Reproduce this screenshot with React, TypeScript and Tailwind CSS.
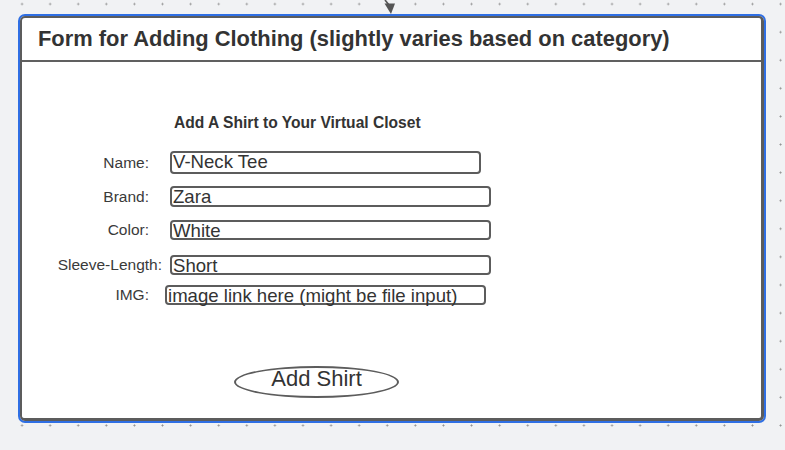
const FIELDS = [
  { label: "Name:", value: "V-Neck Tee", row: "mt-[20px] h-[23px]", pad: "pr-[13px]", input: "ml-[8px] w-[311px]" },
  { label: "Brand:", value: "Zara", row: "mt-[12px] h-[21px]", pad: "pr-[13px]", input: "ml-[8px] w-[321px]" },
  { label: "Color:", value: "White", row: "mt-[13px] h-[20px]", pad: "pr-[13px]", input: "ml-[8px] w-[321px]" },
  { label: "Sleeve-Length:", value: "Short", row: "mt-[15px] h-[20px]", pad: "pr-0", input: "ml-[8px] w-[321px]" },
  { label: "IMG:", value: "image link here (might be file input)", row: "mt-[10px] h-[20px]", pad: "pr-[13px]", input: "ml-[3px] w-[321px]" },
];

function Connector() {
  return (
    <svg className="absolute left-[380px] top-0" width="20" height="16" viewBox="380 0 20 16">
      <path d="M385 0 L389 5" stroke="#555" strokeWidth="1.6" fill="none" />
      <polygon points="384.5,3.5 395,3.5 391,14" fill="#555" />
    </svg>
  );
}

export default function App() {
  return (
    <div className="relative h-[450px] w-full overflow-hidden bg-[#f1f2f4] bg-[radial-gradient(circle,#8f8f8f_0.8px,transparent_1.2px)] bg-[size:28.1px_28.1px] bg-[position:8px_-10px] pt-[14px] font-['Liberation_Sans',Arial,sans-serif] text-[#333]">
      <Connector />
      <div className="ml-[18px] h-[409px] w-[748px] rounded-[7px] border-2 border-[#2f6fe4]">
        <div className="flex h-full flex-col rounded-[5px] border-l-2 border-t-2 border-r-[3px] border-b-[3px] border-[#5c5c5c] bg-white">
          <div className="h-[44px] border-b-2 border-[#606060] pl-[16px] pt-[8px]">
            <h1 className="text-[21.9px] font-bold leading-[26px]">
              Form for Adding Clothing (slightly varies based on category)
            </h1>
          </div>
          <div className="flex flex-col pt-[52px]">
            <h2 className="ml-[152px] text-[15.6px] font-bold leading-[17px]">Add A Shirt to Your Virtual Closet</h2>
            {FIELDS.map((f) => (
              <div key={f.label} className={`flex items-center ${f.row}`}>
                <span className={`w-[140px] text-right text-[15.5px] leading-[16px] text-[#3a3a3a] ${f.pad}`}>{f.label}</span>
                <div
                  className={`h-full whitespace-nowrap rounded-[4px] border-2 border-[#5c5c5c] pl-[1px] text-[18.6px] leading-[17px] ${f.input}`}
                >
                  {f.value}
                </div>
              </div>
            ))}
            <div className="ml-[212px] mt-[61px] flex h-[32px] w-[165px] justify-center rounded-[50%] border-2 border-[#5c5c5c] text-[22px] leading-[22px]">
              Add Shirt
            </div>
          </div>
        </div>
      </div>
    </div>
  );
}
